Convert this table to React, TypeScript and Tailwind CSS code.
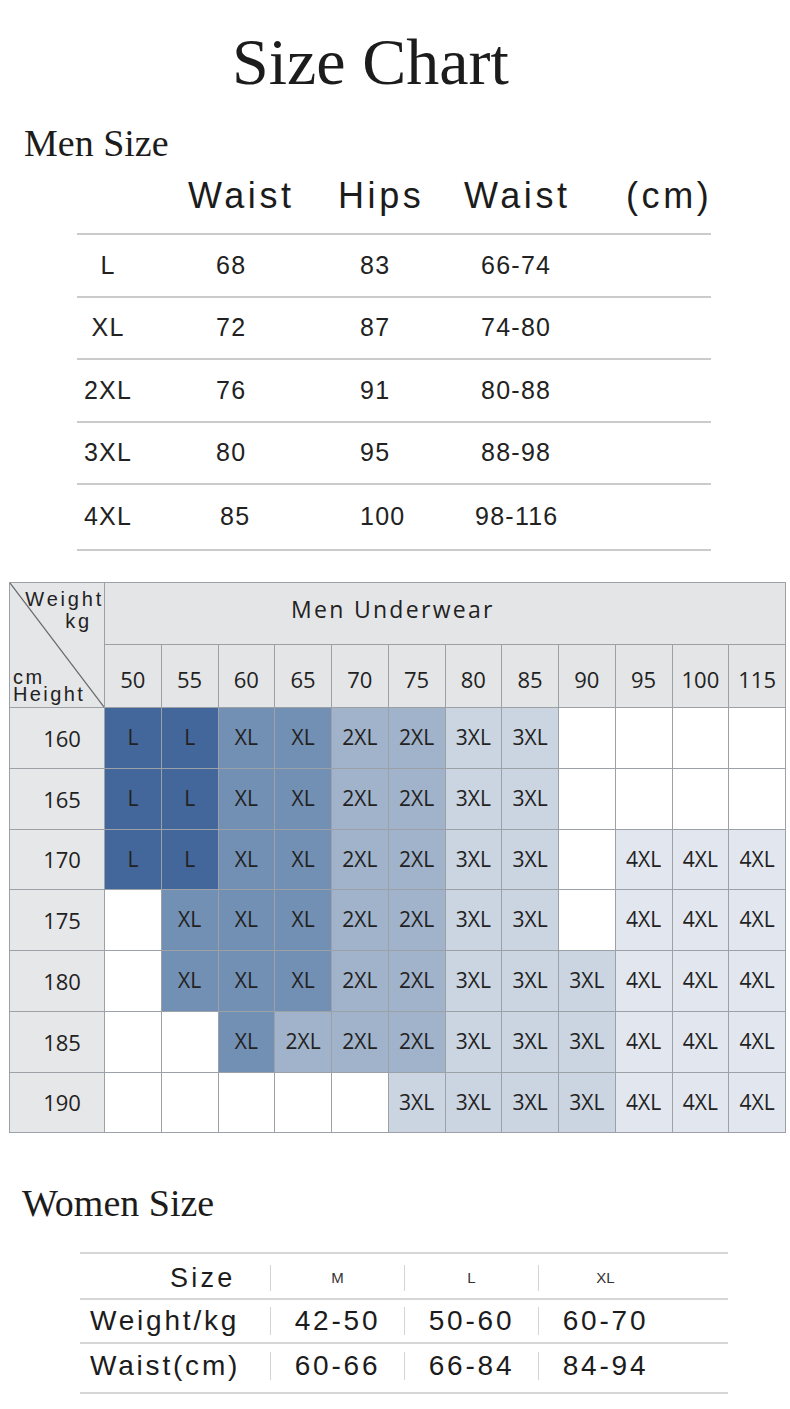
import React from "react";

const weights = ["50", "55", "60", "65", "70", "75", "80", "85", "90", "95", "100", "115"];

const gridRows: [string, string[]][] = [
  ["160", ["L", "L", "XL", "XL", "2XL", "2XL", "3XL", "3XL", "", "", "", ""]],
  ["165", ["L", "L", "XL", "XL", "2XL", "2XL", "3XL", "3XL", "", "", "", ""]],
  ["170", ["L", "L", "XL", "XL", "2XL", "2XL", "3XL", "3XL", "", "4XL", "4XL", "4XL"]],
  ["175", ["", "XL", "XL", "XL", "2XL", "2XL", "3XL", "3XL", "", "4XL", "4XL", "4XL"]],
  ["180", ["", "XL", "XL", "XL", "2XL", "2XL", "3XL", "3XL", "3XL", "4XL", "4XL", "4XL"]],
  ["185", ["", "", "XL", "2XL", "2XL", "2XL", "3XL", "3XL", "3XL", "4XL", "4XL", "4XL"]],
  ["190", ["", "", "", "", "", "3XL", "3XL", "3XL", "3XL", "4XL", "4XL", "4XL"]],
];

const cellColor: Record<string, string> = {
  L: "bg-[#43679a]",
  XL: "bg-[#7290b3]",
  "2XL": "bg-[#a1b3ca]",
  "3XL": "bg-[#cbd4e1]",
  "4XL": "bg-[#e2e7ef]",
  "": "bg-white",
};

const menRows: { s: string; w: string; h: string; r: string; h2: string; wOff: string; rOff: string }[] = [
  { s: "L", w: "68", h: "83", r: "66-74", h2: "h-[63px]", wOff: "", rOff: "" },
  { s: "XL", w: "72", h: "87", r: "74-80", h2: "h-[62px]", wOff: "", rOff: "" },
  { s: "2XL", w: "76", h: "91", r: "80-88", h2: "h-[63px]", wOff: "", rOff: "" },
  { s: "3XL", w: "80", h: "95", r: "88-98", h2: "h-[62px]", wOff: "", rOff: "" },
  { s: "4XL", w: "85", h: "100", r: "98-116", h2: "h-[66px]", wOff: "pl-[4px]", rOff: "-ml-[6px]" },
];

export default function App() {
  return (
    <div className="w-[790px] min-h-[1409px] bg-white text-[#1c1c1c]">
      {/* Title */}
      <div className="h-[124px] pl-[232px] text-[66px] leading-[124px] font-['Liberation_Serif','Times_New_Roman',serif]">
        Size Chart
      </div>
      <div className="h-[38px] pl-[24px] text-[38px] leading-[38px] font-['Liberation_Serif','Times_New_Roman',serif]">
        Men Size
      </div>

      {/* Men table */}
      <div className="font-['Liberation_Sans',Arial,sans-serif]">
        <div className="h-[71px] flex pl-[188px] text-[36px] leading-[67px] tracking-[0.1em]">
          <div className="w-[150px]">Waist</div>
          <div className="w-[126px]">Hips</div>
          <div className="w-[162px]">Waist</div>
          <div>(cm)</div>
        </div>
        <div className="ml-[77px] w-[634px] border-b-2 border-[#cbcbcb] text-[25px] tracking-[0.05em] text-[#222]">
          {menRows.map((r) => (
            <div key={r.s} className={`flex items-center border-t-2 border-[#cbcbcb] ${r.h2}`}>
              <div className="w-[62px] text-center">{r.s}</div>
              <div className={`ml-[77px] w-[144px] ${r.wOff}`}>{r.w}</div>
              <div className="w-[121px]">{r.h}</div>
              <div className={r.rOff}>{r.r}</div>
            </div>
          ))}
        </div>
      </div>

      {/* Underwear grid */}
      <div className="ml-[9px] mt-[31px] w-[777px] grid grid-cols-[95px_repeat(12,minmax(0,1fr))] grid-rows-[62px_63px_61px_61px_60px_61px_61px_61px_60px] border-l border-t border-[#9ca1a8] text-[#222] font-['Open_Sans','Liberation_Sans',sans-serif]">
        <div className="row-span-2 relative border-r border-b border-[#9ca1a8] bg-[#e5e6e8] flex flex-col justify-between font-['Liberation_Sans',Arial,sans-serif]">
          <svg className="absolute inset-0 w-full h-full" viewBox="0 0 100 100" preserveAspectRatio="none">
            <line x1="0" y1="0" x2="100" y2="100" stroke="#666" strokeWidth="1.2" vectorEffect="non-scaling-stroke" />
          </svg>
          <div className="relative text-right pt-[5px] text-[20px] leading-[22px] tracking-[0.14em]">
            <div>Weight</div>
            <div className="pr-[12px]">kg</div>
          </div>
          <div className="relative pl-[3px] pb-[4px] text-[20px] leading-[17px] tracking-[0.12em]">
            <div>cm</div>
            <div>Height</div>
          </div>
        </div>
        <div className="col-span-12 border-r border-b border-[#9ca1a8] bg-[#e4e5e7] flex items-center pl-[186px] pb-[8px] text-[23px] tracking-[0.1em]">
          Men Underwear
        </div>
        {weights.map((w) => (
          <div key={w} className="border-r border-b border-[#9ca1a8] bg-[#e4e5e7] flex items-center justify-center pt-[6px] text-[22px]">
            {w}
          </div>
        ))}
        {gridRows.map(([h, cells]) => (
          <React.Fragment key={h}>
            <div className="border-r border-b border-[#9ca1a8] bg-[#e6e7e9] flex items-center justify-center pl-[10px] text-[22px]">
              {h}
            </div>
            {cells.map((c, i) => (
              <div
                key={h + "-" + i}
                className={`border-r border-b border-[#9ca1a8] ${cellColor[c]} flex items-center justify-center text-[21px]`}
              >
                {c}
              </div>
            ))}
          </React.Fragment>
        ))}
      </div>

      {/* Women */}
      <div className="mt-[50px] h-[40px] pl-[22px] text-[38px] leading-[40px] font-['Liberation_Serif','Times_New_Roman',serif]">
        Women Size
      </div>
      <div className="ml-[80px] mt-[29px] w-[648px] border-t-2 border-b-2 border-[#d6d6d6] font-['Liberation_Sans',Arial,sans-serif] text-[#1c1c1c]">
        <div className="h-[44px] pt-[4px] flex">
          <div className="w-[190px] flex items-center pl-[90px] text-[27px] tracking-[0.12em]">Size</div>
          {["M", "L", "XL"].map((s) => (
            <div key={s} className="w-[134px] py-[7px]">
              <div className="h-full border-l border-[#d4d4d4] flex items-center justify-center text-[15px] text-[#333]">
                {s}
              </div>
            </div>
          ))}
        </div>
        <div className="h-[44px] border-t-2 border-[#d6d6d6] flex">
          <div className="w-[190px] flex items-center pl-[10px] text-[28px] tracking-[0.1em]">Weight/kg</div>
          {["42-50", "50-60", "60-70"].map((s) => (
            <div key={s} className="w-[134px] py-[7px]">
              <div className="h-full border-l border-[#d4d4d4] flex items-center justify-center text-[28px] tracking-[0.1em]">
                {s}
              </div>
            </div>
          ))}
        </div>
        <div className="h-[50px] border-t-2 border-[#d6d6d6] pb-[4px] flex">
          <div className="w-[190px] flex items-center pl-[10px] text-[28px] tracking-[0.1em]">Waist(cm)</div>
          {["60-66", "66-84", "84-94"].map((s) => (
            <div key={s} className="w-[134px] py-[8px]">
              <div className="h-full border-l border-[#d4d4d4] flex items-center justify-center text-[28px] tracking-[0.1em]">
                {s}
              </div>
            </div>
          ))}
        </div>
      </div>
    </div>
  );
}
